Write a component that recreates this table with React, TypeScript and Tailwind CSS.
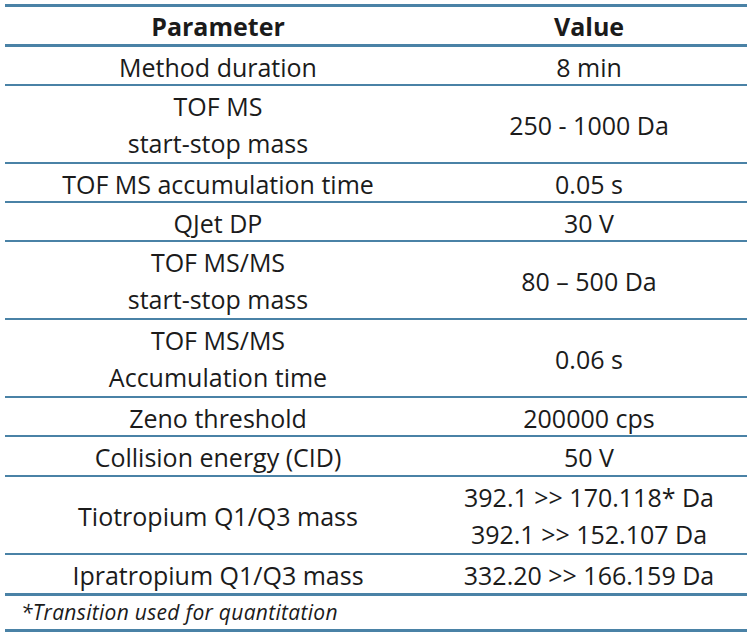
import React from "react";

type Row = { p: string[]; v: string[]; h: string; b: string };

const rows: Row[] = [
  { p: ["Method duration"], v: ["8 min"], h: "h-[37px]", b: "border-b-2" },
  { p: ["TOF MS", "start-stop mass"], v: ["250 - 1000 Da"], h: "h-[76px]", b: "border-b-2" },
  { p: ["TOF MS accumulation time"], v: ["0.05 s"], h: "h-[37px]", b: "border-b-2" },
  { p: ["QJet DP"], v: ["30 V"], h: "h-[37px]", b: "border-b-2" },
  { p: ["TOF MS/MS", "start-stop mass"], v: ["80 – 500 Da"], h: "h-[76px]", b: "border-b-2" },
  { p: ["TOF MS/MS", "Accumulation time"], v: ["0.06 s"], h: "h-[76px]", b: "border-b-2" },
  { p: ["Zeno threshold"], v: ["200000 cps"], h: "h-[37px]", b: "border-b-2" },
  { p: ["Collision energy (CID)"], v: ["50 V"], h: "h-[38px]", b: "border-b-2" },
  { p: ["Tiotropium Q1/Q3 mass"], v: ["392.1 >> 170.118* Da", "392.1 >> 152.107 Da"], h: "h-[76px]", b: "border-b-2" },
  { p: ["Ipratropium Q1/Q3 mass"], v: ["332.20 >> 166.159 Da"], h: "h-[38px]", b: "border-b-[3px]" },
];

function Cell({ lines }: { lines: string[] }) {
  return (
    <div className="flex flex-col items-center justify-center pt-[2px] text-center">
      {lines.map((l, i) => (
        <div key={i} className="leading-[37px] whitespace-nowrap">
          {l}
        </div>
      ))}
    </div>
  );
}

export default function App() {
  return (
    <div className="w-[750px] h-[639px] bg-white pt-[4px] pl-[5px]" style={{ fontFamily: "'Open Sans', 'Noto Sans', sans-serif" }}>
      <div className="w-[742px] border-t-[3px] border-[#4a82a6] text-[#1b1b1b] text-[25px]">
        <div className="grid grid-cols-[426px_316px] h-[37px] box-content border-b-[3px] border-[#4a82a6] font-bold">
          <div className="flex items-center justify-center pt-[1px]">Parameter</div>
          <div className="flex items-center justify-center pt-[1px]">Value</div>
        </div>
        {rows.map((r, i) => (
          <div key={i} className={`grid grid-cols-[426px_316px] ${r.h} ${r.b} border-[#4a82a6] box-content`}>
            <Cell lines={r.p} />
            <Cell lines={r.v} />
          </div>
        ))}
        <div className="h-[32px] box-content border-b-[3px] border-[#4a82a6] flex items-center pl-[16px] pt-[1px] italic text-[21px] tracking-[0.3px]">
          *Transition used for quantitation
        </div>
      </div>
    </div>
  );
}
